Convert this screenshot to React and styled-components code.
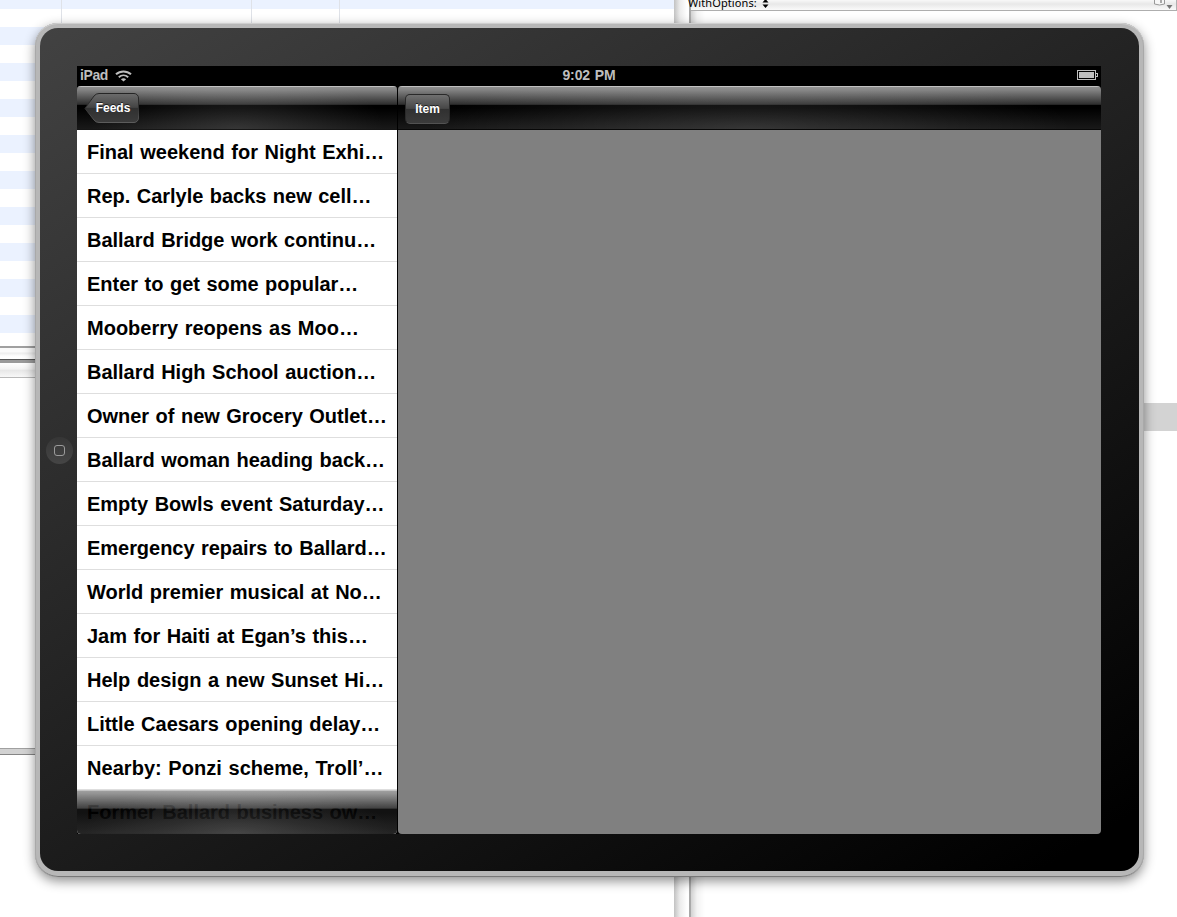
import React from "react";
import styled, { createGlobalStyle } from "styled-components";

const Global = createGlobalStyle`
  * { box-sizing: border-box; }
  body { margin: 0; background: #fff; overflow: hidden; }
`;

const Desktop = styled.div`
  position: relative;
  display: flex;
  width: 1177px;
  height: 917px;
  overflow: hidden;
  background: #fff;
  font-family: "Liberation Sans", Arial, sans-serif;
`;

const BackWindow = styled.div`
  width: 674px;
  display: flex;
  flex-direction: column;
`;

const StripedTable = styled.div`
  display: flex;
  height: 346px;
  background: repeating-linear-gradient(#ebf2ff 0 9px, #fff 9px 27px, #ebf2ff 27px 36px);
`;

const Column = styled.div`
  width: ${(p) => p.$width}px;
  border-right: 1px solid #dfe2e8;
`;

const SplitBar = styled.div`
  height: 14px;
  border-top: 2px solid #a0a0a0;
  border-bottom: 1px solid #555;
  background: linear-gradient(#fafafa 0 4px, #ececec 5px, #fdfdfd 8px, #fff);
`;

const PathBar = styled.div`
  height: 18px;
  border-top: 3px solid #9a9a9a;
  border-bottom: 1px solid #b8b8b8;
  background: linear-gradient(#fff, #f3f3f3 45%, #e6e6e6 50%, #f8f8f8);
`;

const Editor = styled.div`
  height: 370px;
`;

const Divider = styled.div`
  height: 7px;
  border-top: 1px solid #a0a0a0;
  border-bottom: 1px solid #858585;
  background: #d2d2d2;
`;

const Gutter = styled.div`
  width: 17px;
  border-right: 2px solid #a9a9a9;
  background: linear-gradient(90deg, #c2c2c2, #ececec 6px, #fff 13px);
`;

const FrontWindow = styled.div`
  flex: 1;
  background: linear-gradient(90deg, #d2d2d2, #f3f3f3 6px, #fff 14px);
`;

const JumpBar = styled.div`
  display: flex;
  justify-content: space-between;
  height: 11px;
  border-bottom: 1px solid #aeaeae;
  background: linear-gradient(#f8f8f8, #e8e8e8 4px, #fafafa);
`;

const JumpLabel = styled.div`
  display: flex;
  gap: 5px;
  height: 14px;
  margin: -4px 0 0 -3px;
  font: 11px/14px "Noto Sans", sans-serif;
  letter-spacing: 0.1px;
  color: #000;
  white-space: nowrap;
  svg { margin-top: 3px; }
`;

const Selection = styled.div`
  width: 34px;
  height: 28px;
  margin: 392px 0 0 auto;
  background: #d3d3d3;
`;

const Device = styled.div`
  position: absolute;
  left: 35px;
  top: 23px;
  width: 1109px;
  height: 854px;
  padding: 5px 5px 6px;
  border-radius: 23px;
  background: #b7b7b7;
  box-shadow: inset 0 1px 0 #cfcfcf, inset 1px 0 0 #a9a9a9,
    inset -1px 0 0 #a9a9a9, inset 0 -1px 0 #777, 0 4px 12px rgba(0, 0, 0, 0.45);
`;

const Bezel = styled.div`
  display: flex;
  height: 843px;
  padding-top: 38px;
  border-radius: 18px;
  background: linear-gradient(148.7deg, #424242, #000 96%);
`;

const HomeSide = styled.div`
  width: 37px;
  padding: 371px 0 0 6px;
`;

const HomeButton = styled.div`
  display: flex;
  align-items: center;
  justify-content: center;
  width: 27px;
  height: 27px;
  border-radius: 50%;
  background: linear-gradient(#363636, #454545);
`;

const HomeGlyph = styled.div`
  width: 11px;
  height: 11px;
  border: 1px solid #9a9a9a;
  border-radius: 3px;
`;

const Screen = styled.div`
  width: 1024px;
  height: 768px;
  background: #000;
`;

const StatusBar = styled.div`
  display: grid;
  grid-template-columns: 1fr auto 1fr;
  height: 20px;
  padding: 0 3px;
  font-size: 14px;
  line-height: 18px;
  font-weight: bold;
  color: #bebebe;
`;

const Carrier = styled.div`
  display: flex;
  gap: 7px;
  letter-spacing: -0.4px;
  svg { margin-top: 3.500px; }
`;

const Clock = styled.div`
  letter-spacing: -0.1px;
  word-spacing: 1px;
`;

const BatterySlot = styled.div`
  display: flex;
  justify-content: flex-end;
  svg { margin-top: 4px; }
`;

const Panes = styled.div`
  display: flex;
  gap: 1px;
  height: 748px;
`;

const Pane = styled.section`
  position: relative;
  width: ${(p) => p.$width}px;
  height: 748px;
  overflow: hidden;
  border-radius: 4px;
  background: ${(p) => p.$fill};
`;

const NavBar = styled.header`
  height: 44px;
  padding: ${(p) => p.$inset};
  border-bottom: 1px solid ${(p) => p.$edge};
  background:
    radial-gradient(ellipse 46% 64px at 50% 100%, rgba(255, 255, 255, 0.13), rgba(255, 255, 255, 0.07) 45%, rgba(255, 255, 255, 0)),
    linear-gradient(#c0c0c0 0 1px, #8e8e8e 1px, #828282 4px, #303030 18px, #1c1c1c 19px, transparent 19px),
    linear-gradient(#000 22px, #191919);
`;

const BackButton = styled.button`
  display: block;
  position: relative;
  width: 56px;
  height: 31px;
  padding: 0 0 0 3px;
  border: 0;
  background: none;
  color: #fff;
  font: bold 12px/28px "Liberation Sans", Arial, sans-serif;
  text-shadow: 0 -1px 0 #222;
  svg { position: absolute; inset: 0; }
  span { position: relative; top: -1px; left: -0.5px; }
`;

const ItemButton = styled.button`
  display: block;
  width: 45px;
  height: 30px;
  padding: 0;
  border: 1px solid #292929;
  border-bottom-color: #525252;
  border-radius: 5px;
  background: linear-gradient(#707070, #474747 48%, #303030 50%, #3b3b3b);
  color: #fff;
  font: bold 12px/27px "Liberation Sans", Arial, sans-serif;
  text-shadow: 0 -1px 0 #222;
`;

const List = styled.ul`
  margin: 0;
  padding: 0;
  list-style: none;
`;

const Row = styled.li`
  height: 44px;
  padding-left: 10px;
  border-bottom: 1px solid #dedede;
  font-size: 20px;
  line-height: 45px;
  font-weight: bold;
  letter-spacing: ${(p) => p.$track}px;
  word-spacing: 1px;
  white-space: nowrap;
  color: #000;
`;

const Toolbar = styled.footer`
  position: absolute;
  left: 0;
  right: 0;
  bottom: 0;
  height: 44px;
  opacity: 0.93;
  background:
    radial-gradient(ellipse 48% 56px at 50% 100%, rgba(255, 255, 255, 0.15), rgba(255, 255, 255, 0.075) 45%, rgba(255, 255, 255, 0)),
    linear-gradient(#c0c0c0 0 1px, #989898 1px, #8a8a8a 4px, #343434 18px, #101010 19px, transparent 19px),
    linear-gradient(#000 22px, #161616);
`;

const feeds = [
  ["Final weekend for Night Exhi…", 0],
  ["Rep. Carlyle backs new cell…", -0.03],
  ["Ballard Bridge work continu…", -0.02],
  ["Enter to get some popular…", -0.02],
  ["Mooberry reopens as Moo…", 0],
  ["Ballard High School auction…", -0.02],
  ["Owner of new Grocery Outlet…", -0.03],
  ["Ballard woman heading back…", -0.02],
  ["Empty Bowls event Saturday…", 0],
  ["Emergency repairs to Ballard…", -0.04],
  ["World premier musical at No…", 0],
  ["Jam for Haiti at Egan’s this…", 0],
  ["Help design a new Sunset Hi…", 0],
  ["Little Caesars opening delay…", -0.03],
  ["Nearby: Ponzi scheme, Troll’…", 0.04],
  ["Former Ballard business ow…", -0.02],
];

const WifiIcon = () => (
  <svg width="17" height="12" viewBox="0 0 17 12" fill="none" stroke="#bebebe">
    <path d="M1 4.3C5.2.4 11.8.4 16 4.3" strokeWidth="2" />
    <path d="M3.8 7.2c2.7-2.4 6.7-2.4 9.4 0" strokeWidth="1.9" />
    <path d="M8.5 11.6 5.9 9.2c1.5-1.3 3.7-1.3 5.2 0z" fill="#bebebe" stroke="none" />
  </svg>
);

const BatteryIcon = () => (
  <svg width="21" height="11" viewBox="0 0 21 11" shapeRendering="crispEdges">
    <path d="M.5.5h18v9H.5zM19 3.5h1.5v3H19" fill="none" stroke="#bebebe" />
    <path d="M2 2h15v6H2z" fill="#bebebe" />
  </svg>
);

const BackShape = () => (
  <svg width="56" height="31" viewBox="0 0 56 31">
    <defs>
      <linearGradient id="back" x1="0" y1="0" x2="0" y2="1">
        <stop offset="0" stopColor="#6c6c6c" />
        <stop offset=".48" stopColor="#444" />
        <stop offset=".5" stopColor="#303030" />
        <stop offset="1" stopColor="#3b3b3b" />
      </linearGradient>
      <linearGradient id="backEdge" x1="0" y1="0" x2="0" y2="1">
        <stop offset="0" stopColor="#252525" />
        <stop offset=".5" stopColor="#303030" />
        <stop offset="1" stopColor="#5c5c5c" />
      </linearGradient>
    </defs>
    <path
      d="M15 .5H50a4.500 4.500 0 0 1 4.500 4.500V25a4.500 4.500 0 0 1-4.500 4.500H15Q12 29.500 10 27L1 15.500 10 3Q12 .5 15 .5Z"
      fill="url(#back)"
      stroke="url(#backEdge)"
    />
  </svg>
);

const Stepper = () => (
  <svg width="7" height="9" viewBox="0 0 7 9">
    <path d="M3.500 0 6.500 3.500h-6zM3.500 9l3-3.500h-6z" />
  </svg>
);

const Book = styled.svg`
  display: block;
`;

export default function App() {
  return (
    <>
      <Global />
      <Desktop>
        <BackWindow>
          <StripedTable>
            <Column $width={62} />
            <Column $width={190} />
            <Column $width={88} />
          </StripedTable>
          <SplitBar />
          <PathBar />
          <Editor />
          <Divider />
        </BackWindow>
        <Gutter />
        <FrontWindow>
          <JumpBar>
            <JumpLabel>
              WithOptions: <Stepper />
            </JumpLabel>
            <Book width="23" height="10" viewBox="0 0 23 10">
              <path d="M.500 0v4l5 1 5-1V0" fill="#f7f7f7" stroke="#999" />
              <path d="M6 0h2v3H6z" fill="#aaa" />
              <path d="M12.500 5h6l-3 4z" fill="#777" />
              <path d="M22.500 0v10" stroke="#b0b0b0" />
            </Book>
          </JumpBar>
          <Selection />
        </FrontWindow>

        <Device>
          <Bezel>
            <HomeSide>
              <HomeButton>
                <HomeGlyph />
              </HomeButton>
            </HomeSide>
            <Screen>
              <StatusBar>
                <Carrier>
                  iPad <WifiIcon />
                </Carrier>
                <Clock>9:02 PM</Clock>
                <BatterySlot>
                  <BatteryIcon />
                </BatterySlot>
              </StatusBar>
              <Panes>
                <Pane $width={320} $fill="#fff">
                  <NavBar $inset="7px 0 0 7px" $edge="#161616">
                    <BackButton>
                      <BackShape />
                      <span>Feeds</span>
                    </BackButton>
                  </NavBar>
                  <List>
                    {feeds.map(([title, track]) => (
                      <Row key={title} $track={track}>
                        {title}
                      </Row>
                    ))}
                  </List>
                  <Toolbar />
                </Pane>
                <Pane $width={703} $fill="#808080">
                  <NavBar $inset="8px 0 0 7px" $edge="#080808">
                    <ItemButton>Item</ItemButton>
                  </NavBar>
                </Pane>
              </Panes>
            </Screen>
          </Bezel>
        </Device>
      </Desktop>
    </>
  );
}
